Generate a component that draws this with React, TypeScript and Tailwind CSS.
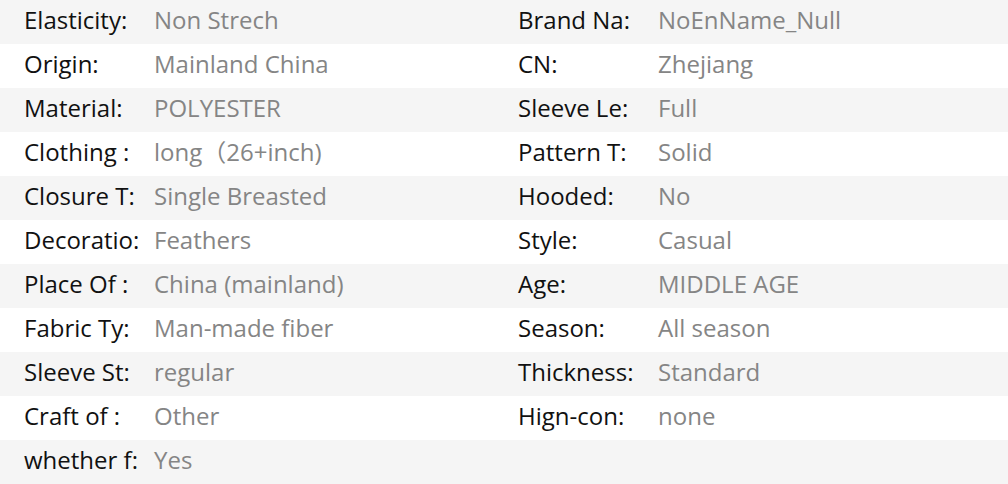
const rows: [string, string, string?, string?][] = [
  ['Elasticity:', 'Non Strech', 'Brand Na:', 'NoEnName_Null'],
  ['Origin:', 'Mainland China', 'CN:', 'Zhejiang'],
  ['Material:', 'POLYESTER', 'Sleeve Le:', 'Full'],
  ['Clothing :', 'long（26+inch)', 'Pattern T:', 'Solid'],
  ['Closure T:', 'Single Breasted', 'Hooded:', 'No'],
  ['Decoratio:', 'Feathers', 'Style:', 'Casual'],
  ['Place Of :', 'China (mainland)', 'Age:', 'MIDDLE AGE'],
  ['Fabric Ty:', 'Man-made fiber', 'Season:', 'All season'],
  ['Sleeve St:', 'regular', 'Thickness:', 'Standard'],
  ['Craft of :', 'Other', 'Hign-con:', 'none'],
  ['whether f:', 'Yes'],
]

export default function App() {
  return (
    <div
      className="w-[1008px] h-[484px] bg-white text-[24px] overflow-hidden"
      style={{ fontFamily: '"Open Sans", "Noto Sans", "Noto Sans CJK SC", sans-serif' }}
    >
      {rows.map(([l1, v1, l2, v2], i) => (
        <div
          key={i}
          className={`flex items-center h-[44px] pb-[5px] leading-none ${i % 2 === 0 ? 'bg-[#f5f5f5]' : 'bg-white'}`}
        >
          <div className="flex w-[518px] pl-6 whitespace-nowrap">
            <span className="w-[130px] text-[#111111]">{l1}</span>
            <span className="text-[#858585]">{v1}</span>
          </div>
          {l2 && (
            <div className="flex whitespace-nowrap">
              <span className="w-[140px] text-[#111111]">{l2}</span>
              <span className="text-[#858585]">{v2}</span>
            </div>
          )}
        </div>
      ))}
    </div>
  )
}
